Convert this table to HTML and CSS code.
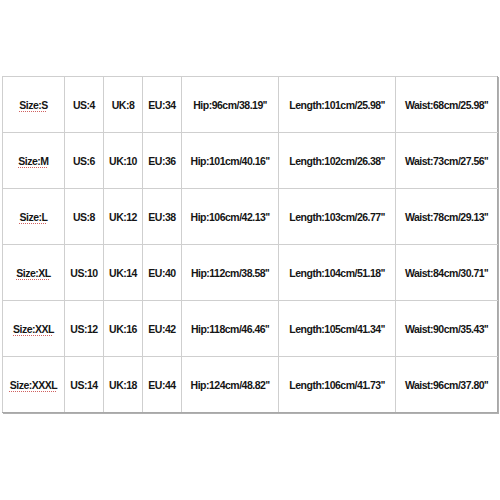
FILE: index.html
```html
<!DOCTYPE html>
<html>
<head>
<meta charset="utf-8">
<link rel="stylesheet" href="styles.css">
</head>
<body>
<div class="page">
<table class="chart">
<colgroup>
<col class="c-size"><col class="c-us"><col class="c-uk"><col class="c-eu"><col class="c-hip"><col class="c-len"><col class="c-waist">
</colgroup>
<tbody>
<tr><td><span class="spell">Size:S</span></td><td>US:4</td><td>UK:8</td><td>EU:34</td><td>Hip:96cm/38.19''</td><td>Length:101cm/25.98''</td><td>Waist:68cm/25.98''</td></tr>
<tr><td><span class="spell">Size:M</span></td><td>US:6</td><td>UK:10</td><td>EU:36</td><td>Hip:101cm/40.16''</td><td>Length:102cm/26.38''</td><td>Waist:73cm/27.56''</td></tr>
<tr><td><span class="spell">Size:L</span></td><td>US:8</td><td>UK:12</td><td>EU:38</td><td>Hip:106cm/42.13''</td><td>Length:103cm/26.77''</td><td>Waist:78cm/29.13''</td></tr>
<tr><td><span class="spell">Size:XL</span></td><td>US:10</td><td>UK:14</td><td>EU:40</td><td>Hip:112cm/38.58''</td><td>Length:104cm/51.18''</td><td>Waist:84cm/30.71''</td></tr>
<tr><td><span class="spell">Size:XXL</span></td><td>US:12</td><td>UK:16</td><td>EU:42</td><td>Hip:118cm/46.46''</td><td>Length:105cm/41.34''</td><td>Waist:90cm/35.43''</td></tr>
<tr><td><span class="spell">Size:XXXL</span></td><td>US:14</td><td>UK:18</td><td>EU:44</td><td>Hip:124cm/48.82''</td><td>Length:106cm/41.73''</td><td>Waist:96cm/37.80''</td></tr>
</tbody>
</table>
</div>
</body>
</html>
```
FILE: styles.css
```css
html, body {
  margin: 0;
  padding: 0;
  background: #ffffff;
}
.page {
  width: 500px;
  height: 500px;
  padding: 76px 0 0 2px;
  box-sizing: border-box;
}
.chart {
  border-collapse: collapse;
  table-layout: fixed;
  width: 495px;
  font-family: "Liberation Sans", Arial, sans-serif;
  font-weight: bold;
  font-size: 10.5px;
  letter-spacing: -0.5px;
  color: #151515;
  box-shadow: 1px 1px 0 #b0b0b0;
}
.chart td {
  border: 1px solid #cfcfcf;
  height: 55px;
  padding: 0;
  text-align: center;
  vertical-align: middle;
  white-space: nowrap;
}
.chart tr:last-child td {
  border-bottom-color: #a8a8a8;
}
.chart td:last-child {
  border-right-color: #a8a8a8;
}
.c-size { width: 62px; }
.c-us { width: 39px; }
.c-uk { width: 39px; }
.c-eu { width: 39px; }
.c-hip { width: 97px; }
.c-len { width: 117px; }
.c-waist { width: 102px; }
.spell {
  text-decoration: underline dotted #d06060 1px;
  text-underline-offset: 2px;
}
```
